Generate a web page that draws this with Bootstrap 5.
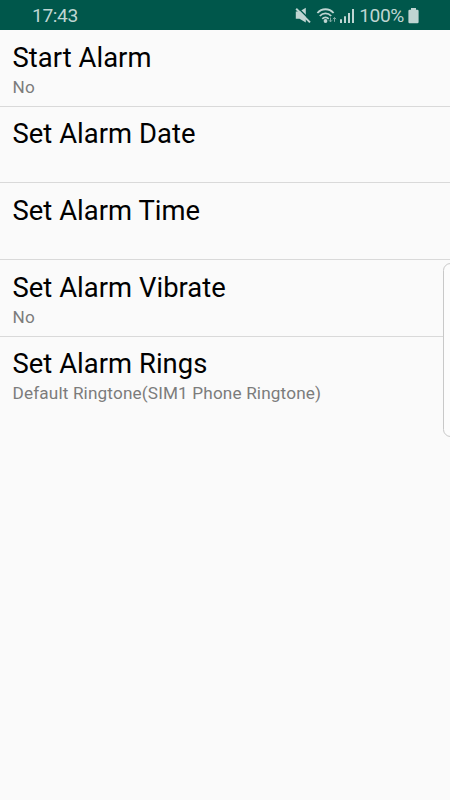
<!DOCTYPE html>
<html lang="en">
<head>
<meta charset="utf-8">
<meta name="viewport" content="width=device-width, initial-scale=1">
<title>Alarm settings</title>
<link href="https://cdn.jsdelivr.net/npm/bootstrap@5.3.0/dist/css/bootstrap.min.css" rel="stylesheet">
<style>
body { font-family: Roboto, sans-serif; background: #fafafa; min-height: 100vh; overflow: hidden; }
.status-bar { height: 30px; background: #00574b; color: #bfd5d2; font-size: 19.2px; line-height: 30px; letter-spacing: -.4px; padding: 1px 31px 0 32px; }
.status-bar svg { display: block; fill: currentColor; }
.setting { height: 76.7px; padding: 9.7px 12.5px 0; background: transparent; border: 0; border-bottom: 1px solid #d9d9d9; border-radius: 0; }
.setting:last-child { border-bottom: 0; }
.setting-title { font-size: 27.4px; line-height: 36px; color: #000; letter-spacing: .04px; }
.setting-value { font-size: 17.2px; line-height: 23px; color: #7c7c7c; letter-spacing: .14px; }
.edge-handle { top: 263px; right: -8px; width: 15px; height: 174px; border: 1.5px solid #c8c8c8; border-radius: 8px; background: #fcfcfc; }
</style>
</head>
<body class="position-relative">
<header class="status-bar d-flex align-items-center justify-content-between">
  <span class="status-time">17:43</span>
  <div class="d-flex align-items-center">
    <svg width="64" height="30" viewBox="0 0 64 30" aria-hidden="true">
      <path d="M.8 10.5H4.5L10.8 6.8V21.5L4.5 17.8H.8Z"/>
      <path d="M2.8 6.8L16.8 20.8" fill="none" stroke="#00574b" stroke-width="1.5"/>
      <path d="M1.2 7.8L15 21.4" fill="none" stroke="currentColor" stroke-width="2"/>
      <g fill="none" stroke="currentColor" stroke-width="1.8">
        <path d="M22.4 12C26.8 7 34.2 7 38.6 12"/>
        <path d="M24.8 15C28 11.4 33 11.4 36.2 15"/>
        <path d="M27.3 17.8C29.2 15.8 31.8 15.8 33.7 17.8"/>
      </g>
      <circle cx="30.5" cy="20" r="1.9"/>
      <path d="M35.5 16.6V21M33.9 19.2L35.5 20.9L37.1 19.2M39.5 20.8V16.4M37.9 18.2L39.5 16.5L41.1 18.2" fill="none" stroke="#7fa9a3" stroke-width="1"/>
      <path d="M45 18.3H47V22H45ZM49 15.3H51V22H49ZM53 12H55V22H53ZM57 8H59V22H57Z"/>
    </svg>
    <span class="status-level">100%</span>
    <svg width="11" height="30" viewBox="0 0 11 30" class="ms-1" aria-hidden="true"><path d="M3 7H8V8.7H9.4Q10.6 8.7 10.6 9.9V21Q10.6 22.2 9.4 22.2H1.6Q.4 22.2 .4 21V9.9Q.4 8.7 1.6 8.7H3Z"/></svg>
  </div>
</header>
<main class="list-group list-group-flush">
  <div class="list-group-item setting"><div class="setting-title">Start Alarm</div><div class="setting-value">No</div></div>
  <div class="list-group-item setting"><div class="setting-title">Set Alarm Date</div></div>
  <div class="list-group-item setting"><div class="setting-title">Set Alarm Time</div></div>
  <div class="list-group-item setting"><div class="setting-title">Set Alarm Vibrate</div><div class="setting-value">No</div></div>
  <div class="list-group-item setting"><div class="setting-title">Set Alarm Rings</div><div class="setting-value">Default Ringtone(SIM1 Phone Ringtone)</div></div>
</main>
<div class="edge-handle position-absolute"></div>
<script src="https://cdn.jsdelivr.net/npm/bootstrap@5.3.0/dist/js/bootstrap.bundle.min.js"></script>
</body>
</html>
